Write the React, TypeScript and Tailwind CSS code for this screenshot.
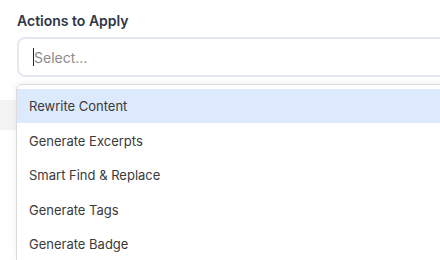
import { useState } from 'react';

const actions = [
  'Rewrite Content',
  'Generate Excerpts',
  'Smart Find & Replace',
  'Generate Tags',
  'Generate Badge',
];

export default function App() {
  const [active, setActive] = useState(0);

  return (
    <div
      className="relative h-[260px] w-[440px] overflow-hidden bg-white"
      style={{ fontFamily: 'Inter, "Noto Sans", sans-serif' }}
    >
      <div className="pl-[17px] pt-[11px]">
        <label className="block text-[14px] font-semibold leading-[20px] text-[#2d3748]">
          Actions to Apply
        </label>
        <div className="mt-[6px] flex h-[40px] w-[460px] items-center rounded-lg border-2 border-[#e3e8f1] bg-white pl-[14px]">
          <span className="h-[18px] w-px bg-[#222]" />
          <span className="text-[14px] text-[#8b8b8b]">Select...</span>
        </div>
      </div>

      {/* section underneath the open menu */}
      <div className="mt-[23px] h-[30px] bg-[#f4f4f5]" />

      <div className="absolute left-[16px] top-[84px] w-[440px] rounded-tl-md border border-[#dcdcdc] bg-white pt-[4px] shadow-[-1px_-2px_6px_rgba(0,0,0,0.05)]">
        {actions.map((a, i) => (
          <div
            key={a}
            onMouseEnter={() => setActive(i)}
            className={`flex h-[34.4px] items-center pl-[12px] pt-[2px] text-[13px] text-[#3a3a3a] ${
              i === active ? 'bg-[#dde9fc]' : ''
            }`}
          >
            {a}
          </div>
        ))}
      </div>
    </div>
  );
}
